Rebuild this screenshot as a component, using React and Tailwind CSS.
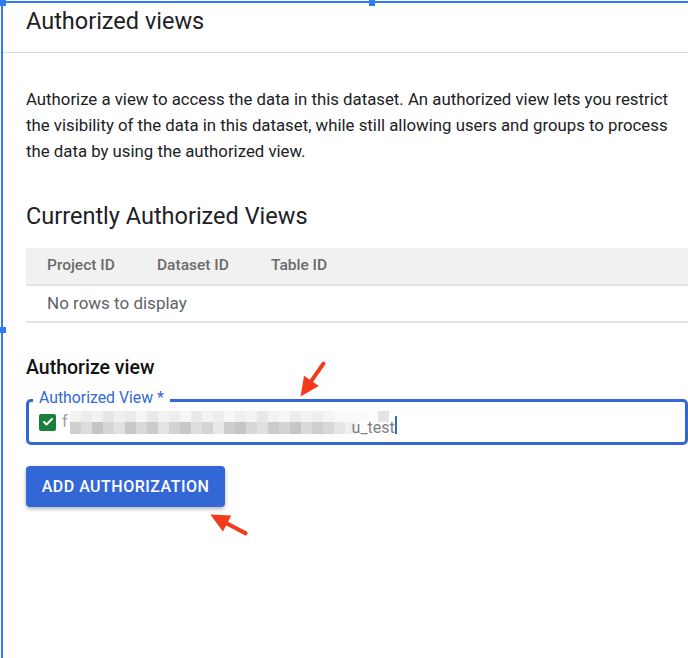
import { Check } from 'lucide-react'

const topRow = [
  'bg-[#f4f4f4]', 'bg-[#ececec]', 'bg-[#f2f2f2]', 'bg-[#e6e6e6]', 'bg-[#f0f0f0]', 'bg-[#ebebeb]',
  'bg-[#f5f5f5]', 'bg-[#e9e9e9]', 'bg-[#f1f1f1]', 'bg-[#eeeeee]', 'bg-[#f6f6f6]', 'bg-[#eaeaea]',
  'bg-[#f3f3f3]', 'bg-[#ededed]', 'bg-[#f7f7f7]', 'bg-[#efefef]', 'bg-[#f4f4f4]', 'bg-[#e8e8e8]',
  'bg-[#f2f2f2]', 'bg-[#f6f6f6]', 'bg-[#ececec]', 'bg-[#f3f3f3]', 'bg-[#eeeeee]', 'bg-[#f5f5f5]',
  'bg-[#f9f9f9]', 'bg-[#fafafa]', 'bg-[#fbfbfb]', 'bg-[#fcfcfc]', 'bg-[#e4e4e4]',
]

const bottomRow = [
  'bg-[#cfcfcf]', 'bg-[#dcdcdc]', 'bg-[#c4c4c4]', 'bg-[#d6d6d6]', 'bg-[#e1e1e1]', 'bg-[#c9c9c9]',
  'bg-[#d9d9d9]', 'bg-[#cccccc]', 'bg-[#e3e3e3]', 'bg-[#d2d2d2]', 'bg-[#c7c7c7]', 'bg-[#dedede]',
  'bg-[#d4d4d4]', 'bg-[#e8e8e8]', 'bg-[#cdcdcd]', 'bg-[#c5c5c5]', 'bg-[#d8d8d8]', 'bg-[#e0e0e0]',
  'bg-[#cbcbcb]', 'bg-[#d3d3d3]', 'bg-[#c6c6c6]', 'bg-[#dadada]', 'bg-[#cecece]', 'bg-[#d7d7d7]',
  'bg-[#e5e5e5]', 'bg-[#f0f0f0]',
]

function Mosaic() {
  return (
    <div className="flex items-center">
      <span className="text-[16px] text-[#9aa0a6] mr-[2px]">f</span>
      <div className="flex flex-col">
        <div className="flex h-[11px]">
          {topRow.map((c, i) => (
            <div key={i} className={`w-[11px] h-full ${c}`} />
          ))}
        </div>
        <div className="flex h-[12px] items-stretch">
          {bottomRow.map((c, i) => (
            <div key={i} className={`w-[11px] h-full ${c}`} />
          ))}
          <span className="text-[16px] leading-[12px] text-[#7a7f85] -ml-[4px] self-end">u_test</span>
          <span className="w-[2px] h-[18px] bg-[#3367d6] self-end" />
        </div>
      </div>
    </div>
  )
}

function RedArrow({ className, rotate }) {
  return (
    <svg className={className} viewBox="0 0 44 44" width="44" height="44">
      <g transform={`rotate(${rotate} 22 22)`}>
        <path d="M22 2 L22 28" stroke="#f33a1c" strokeWidth="4" strokeLinecap="round" />
        <path d="M13 23 L22 42 L31 23 Z" fill="#f33a1c" />
      </g>
    </svg>
  )
}

export default function App() {
  return (
    <div className="relative w-[688px] h-[658px] bg-white overflow-hidden font-['Roboto',sans-serif] text-[#202124]">
      {/* panel */}
      <div className="h-[53px] border-b border-[#dadce0] pl-[26px] pt-[6px]">
        <h1 className="text-[23.5px] leading-[30px] font-normal">Authorized views</h1>
      </div>

      <div className="pl-[26px]">
        <p className="mt-[33px] w-[650px] text-[16.8px] leading-[26px] text-[#202124]">
          Authorize a view to access the data in this dataset. An authorized view lets you restrict the
          visibility of the data in this dataset, while still allowing users and groups to process the data by
          using the authorized view.
        </p>

        <h2 className="mt-[38px] text-[23.5px] leading-[28px] font-normal">Currently Authorized Views</h2>

        <div className="mt-[18px]">
          <div className="flex h-[38px] items-center bg-[#f1f1f1] border-b-2 border-[#e4e4e4] pl-[21px] text-[15.5px] font-medium text-[#6b6b6b]">
            <span className="w-[110px]">Project ID</span>
            <span className="w-[114px]">Dataset ID</span>
            <span>Table ID</span>
          </div>
          <div className="flex h-[37px] items-center border-b-2 border-[#e4e4e4] pl-[21px] text-[17px] text-[#5f6368]">
            No rows to display
          </div>
        </div>

        <h3 className="mt-[32px] text-[19.5px] leading-[26px] font-medium text-[#111]">Authorize view</h3>

        <div className="relative mt-[18px] h-[46px] border-[3px] border-[#3367d6] rounded-[5px] flex items-center pl-[10px]">
          <span className="absolute -top-[15px] left-[4px] bg-white px-[6px] text-[15.8px] leading-[22px] text-[#3367d6]">
            Authorized View *
          </span>
          <span className="w-[17px] h-[17px] rounded-[2px] bg-[#188038] flex items-center justify-center mr-[6px]">
            <Check className="w-[12px] h-[12px] text-white" strokeWidth={4} />
          </span>
          <Mosaic />
        </div>

        <button className="mt-[21px] h-[41px] w-[199px] rounded-[4px] bg-[#3367d6] text-white text-[16px] font-medium tracking-[0.5px] shadow-[0_2px_4px_rgba(0,0,0,0.3)]">
          ADD AUTHORIZATION
        </button>
      </div>

      {/* annotation arrows */}
      <RedArrow className="absolute left-[290px] top-[358px]" rotate={35} />
      <RedArrow className="absolute left-[206px] top-[502px]" rotate={118} />

      {/* selection outline */}
      <div className="absolute top-[1px] left-0 right-0 h-[2px] bg-[#2f7bf5]" />
      <div className="absolute top-0 bottom-0 left-[1px] w-[2px] bg-[#2f7bf5]" />
      <div className="absolute top-0 left-0 w-[6px] h-[6px] bg-[#2f7bf5]" />
      <div className="absolute top-0 left-[369px] w-[6px] h-[6px] bg-[#2f7bf5]" />
      <div className="absolute top-[327px] left-0 w-[6px] h-[6px] bg-[#2f7bf5]" />
    </div>
  )
}
